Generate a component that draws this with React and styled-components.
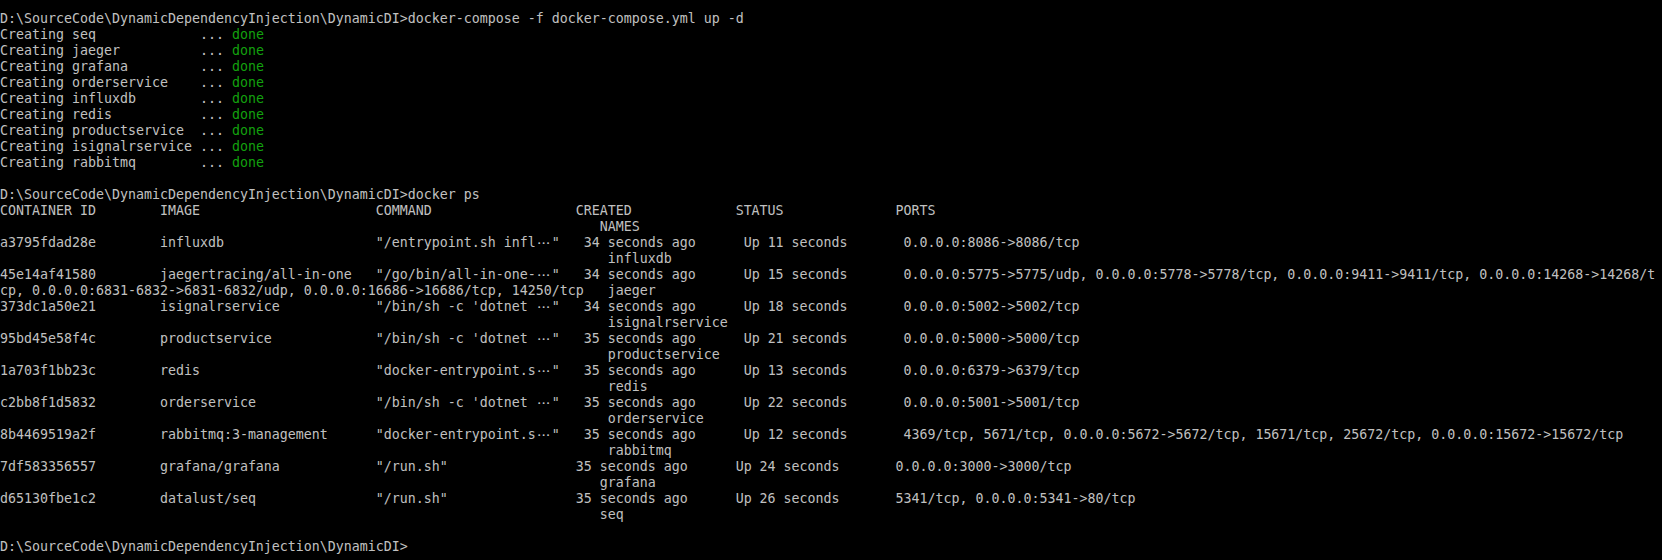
import React from 'react';
import styled, { createGlobalStyle } from 'styled-components';

// console is 207 cells wide, 8x16 cells
const COLS = 207;
const PROMPT = 'D:\\SourceCode\\DynamicDependencyInjection\\DynamicDI>';

const created = ['seq', 'jaeger', 'grafana', 'orderservice', 'influxdb', 'redis', 'productservice', 'isignalrservice', 'rabbitmq'];

const containers = [
	['a3795fdad28e', 'influxdb', '"/entrypoint.sh infl…"', '34 seconds ago', 'Up 11 seconds', '0.0.0.0:8086->8086/tcp', 'influxdb'],
	['45e14af41580', 'jaegertracing/all-in-one', '"/go/bin/all-in-one-…"', '34 seconds ago', 'Up 15 seconds', '0.0.0.0:5775->5775/udp, 0.0.0.0:5778->5778/tcp, 0.0.0.0:9411->9411/tcp, 0.0.0.0:14268->14268/tcp, 0.0.0.0:6831-6832->6831-6832/udp, 0.0.0.0:16686->16686/tcp, 14250/tcp', 'jaeger'],
	['373dc1a50e21', 'isignalrservice', '"/bin/sh -c \'dotnet …"', '34 seconds ago', 'Up 18 seconds', '0.0.0.0:5002->5002/tcp', 'isignalrservice'],
	['95bd45e58f4c', 'productservice', '"/bin/sh -c \'dotnet …"', '35 seconds ago', 'Up 21 seconds', '0.0.0.0:5000->5000/tcp', 'productservice'],
	['1a703f1bb23c', 'redis', '"docker-entrypoint.s…"', '35 seconds ago', 'Up 13 seconds', '0.0.0.0:6379->6379/tcp', 'redis'],
	['c2bb8f1d5832', 'orderservice', '"/bin/sh -c \'dotnet …"', '35 seconds ago', 'Up 22 seconds', '0.0.0.0:5001->5001/tcp', 'orderservice'],
	['8b4469519a2f', 'rabbitmq:3-management', '"docker-entrypoint.s…"', '35 seconds ago', 'Up 12 seconds', '4369/tcp, 5671/tcp, 0.0.0.0:5672->5672/tcp, 15671/tcp, 25672/tcp, 0.0.0.0:15672->15672/tcp', 'rabbitmq'],
	['7df583356557', 'grafana/grafana', '"/run.sh"', '35 seconds ago', 'Up 24 seconds', '0.0.0.0:3000->3000/tcp', 'grafana'],
	['d65130fbe1c2', 'datalust/seq', '"/run.sh"', '35 seconds ago', 'Up 26 seconds', '5341/tcp, 0.0.0.0:5341->80/tcp', 'seq'],
];

const widths = [20, 27, 25, 20, 20, 170];

const GlobalStyle = createGlobalStyle`
	html, body {
		margin: 0;
		padding: 0;
		background: #000;
	}
`

const Console = styled.div`
	box-sizing: border-box;
	width: 1662px;
	height: 560px;
	padding-top: 11px;
	background: #000;
	color: #c0c0c0;
	font-family: "DejaVu Sans Mono", "Liberation Mono", monospace;
	font-size: 13.29px;
	line-height: 16px;
	white-space: pre;
	overflow: hidden;
`

const Line = styled.div`
	height: 16px;
`

const Done = styled.span`
	color: #13a10e;
`

// the CJK console draws the ellipsis over two cells
const Wide = styled.span`
	display: inline-block;
	width: 16px;
	text-align: center;
	font-family: "Noto Sans CJK SC", sans-serif;
	line-height: 16px;
	vertical-align: top;
`

const cellsOf = ch => (ch === '…' ? 2 : 1);

const wrap = text => {
	const out = [];
	let cur = '';
	let used = 0;
	for (const ch of text) {
		const w = cellsOf(ch);
		if (used + w > COLS) {
			out.push(cur);
			cur = '';
			used = 0;
		}
		cur += ch;
		used += w;
	}
	out.push(cur);
	return out;
};

const row = cols => cols.slice(0, 6).map((c, i) => c.padEnd(widths[i])).join('') + cols[6];

const Text = ({ value }) => {
	const parts = value.split('…');
	return parts.map((p, i) => (
		<React.Fragment key={i}>
			{p}
			{i < parts.length - 1 && <Wide>…</Wide>}
		</React.Fragment>
	));
};

const App = () => {
	const header = row(['CONTAINER ID', 'IMAGE', 'COMMAND', 'CREATED', 'STATUS', 'PORTS', 'NAMES']);
	const psLines = [header, ...containers.map(row)].flatMap(wrap);

	return (
		<>
			<GlobalStyle />
			<Console>
				<Line>{PROMPT}docker-compose -f docker-compose.yml up -d</Line>
				{created.map(name => (
					<Line key={name}>
						{`Creating ${name.padEnd(15)} ... `}<Done>done</Done>
					</Line>
				))}
				<Line />
				<Line>{PROMPT}docker ps</Line>
				{psLines.map((l, i) => (
					<Line key={i}><Text value={l} /></Line>
				))}
				<Line />
				<Line>{PROMPT}</Line>
			</Console>
		</>
	);
};

export default App;
